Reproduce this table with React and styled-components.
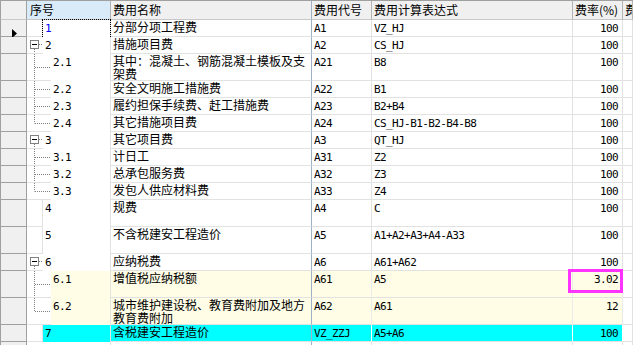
import React from "react";
import styled, { createGlobalStyle } from "styled-components";

const CJK = `"Noto Sans CJK SC", "Noto Sans", sans-serif`;
const MONO = `"DejaVu Sans Mono", "Liberation Mono", "Noto Sans CJK SC", monospace`;

const GlobalStyle = createGlobalStyle`
  html, body {
    margin: 0;
    padding: 0;
    background: #ffffff;
    overflow: hidden;
  }
`;

// 列宽（含右侧分隔线）
const W = { sel: 27, seq: 84, name: 201, code: 60, expr: 201, rate: 50 };

const rows = [
  { seq: "1", name: "分部分项工程费", code: "A1", expr: "VZ_HJ", rate: "100", tree: "leaf", current: true },
  { seq: "2", name: "措施项目费", code: "A2", expr: "CS_HJ", rate: "100", tree: "parent" },
  { seq: "2.1", name: "其中：混凝土、钢筋混凝土模板及支架费", code: "A21", expr: "B8", rate: "100", tree: "child", tall: true },
  { seq: "2.2", name: "安全文明施工措施费", code: "A22", expr: "B1", rate: "100", tree: "child" },
  { seq: "2.3", name: "履约担保手续费、赶工措施费", code: "A23", expr: "B2+B4", rate: "100", tree: "child" },
  { seq: "2.4", name: "其它措施项目费", code: "A24", expr: "CS_HJ-B1-B2-B4-B8", rate: "100", tree: "last" },
  { seq: "3", name: "其它项目费", code: "A3", expr: "QT_HJ", rate: "100", tree: "parent" },
  { seq: "3.1", name: "计日工", code: "A31", expr: "Z2", rate: "100", tree: "child" },
  { seq: "3.2", name: "总承包服务费", code: "A32", expr: "Z3", rate: "100", tree: "child" },
  { seq: "3.3", name: "发包人供应材料费", code: "A33", expr: "Z4", rate: "100", tree: "last" },
  { seq: "4", name: "规费", code: "A4", expr: "C", rate: "100", tree: "leaf", tall: true },
  { seq: "5", name: "不含税建安工程造价", code: "A5", expr: "A1+A2+A3+A4-A33", rate: "100", tree: "leaf", tall: true },
  { seq: "6", name: "应纳税费", code: "A6", expr: "A61+A62", rate: "100", tree: "parent" },
  { seq: "6.1", name: "增值税应纳税额", code: "A61", expr: "A5", rate: "3.02", tree: "child", tall: true, tone: "yellow" },
  { seq: "6.2", name: "城市维护建设税、教育费附加及地方教育费附加", code: "A62", expr: "A61", rate: "12", tree: "last", tall: true, tone: "yellow" },
  { seq: "7", name: "含税建安工程造价", code: "VZ_ZZJ", expr: "A5+A6", rate: "100", tree: "leaf", tone: "cyan" },
];

const tones = {
  yellow: { bg: "#fffde6", line: "#ebebeb" },
  cyan: { bg: "#00ffff", line: "#ffffff" },
};

const Sheet = styled.div`
  position: relative;
  width: 633px;
  height: 345px;
  overflow: hidden;
  background: #ffffff;
`;

const HeaderRow = styled.div`
  display: flex;
  height: 20px;
  box-sizing: border-box;
  border-top: 1px solid #a0a0a0;
`;

const HeadCell = styled.div`
  flex: ${(p) => (p.$w ? "none" : "1")};
  width: ${(p) => (p.$w ? `${p.$w}px` : "auto")};
  min-width: 0;
  box-sizing: border-box;
  height: 100%;
  padding-left: ${(p) => p.$pad || 2}px;
  background: ${(p) => (p.$active ? "#d9eaf9" : "#f0f0f0")};
  border-left: ${(p) => (p.$edge ? "1px solid #a0a0a0" : "none")};
  border-right: 1px solid ${(p) => p.$line || "#b4b4b4"};
  border-bottom: 1px solid #c8c8c8;
  font-family: ${CJK};
  font-size: 12px;
  line-height: 18px;
  color: #000000;
  white-space: nowrap;
  overflow: hidden;
`;

const Row = styled.div`
  display: flex;
  height: ${(p) => p.$h}px;
`;

const SelCell = styled.div`
  flex: none;
  width: ${W.sel}px;
  box-sizing: border-box;
  height: 100%;
  padding: 4px 0 0 11px;
  background: #f0f0f0;
  border-left: 1px solid #a0a0a0;
  border-right: 1px solid #a0a0a0;
  border-bottom: 1px solid #a0a0a0;
`;

const SeqCell = styled.div`
  flex: none;
  display: flex;
  width: ${W.seq}px;
  box-sizing: border-box;
  height: 100%;
  border-right: 1px solid #e2e2e2;
  border-bottom: 1px solid #e2e2e2;
  background: #ffffff;
`;

const TreeArea = styled.div`
  flex: none;
  width: ${(p) => p.$w}px;
  box-sizing: border-box;
  height: 100%;
  border-right: ${(p) => (p.$divider ? "1px solid #e2e2e2" : "none")};

  svg {
    display: block;
  }
`;

const SeqText = styled.div`
  flex: 1;
  height: 100%;
  padding: 2px 2px 0;
  background: ${(p) => p.$bg || "#ffffff"};
  color: ${(p) => (p.$current ? "#0000ff" : "#000000")};
  outline: ${(p) => (p.$current ? "1px dotted #000000" : "none")};
  font-family: ${MONO};
  font-size: 11px;
  letter-spacing: -0.6px;
  line-height: 13px;
  white-space: nowrap;
`;

const Cell = styled.div`
  flex: ${(p) => (p.$w ? "none" : "1")};
  width: ${(p) => (p.$w ? `${p.$w}px` : "auto")};
  box-sizing: border-box;
  height: 100%;
  padding: ${(p) => (p.$mono ? "2px" : "0")} ${(p) => (p.$right ? 4 : 2)}px 0 2px;
  background: ${(p) => p.$bg || "#ffffff"};
  border-right: 1px solid ${(p) => p.$line || "#e2e2e2"};
  border-bottom: 1px solid #e2e2e2;
  font-family: ${(p) => (p.$mono ? MONO : CJK)};
  font-size: ${(p) => (p.$mono ? 11 : 12)}px;
  letter-spacing: ${(p) => (p.$mono ? "-0.6px" : "0")};
  line-height: 13px;
  text-align: ${(p) => (p.$right ? "right" : "left")};
  color: #000000;
`;

const Highlight = styled.div`
  position: absolute;
  left: 568px;
  top: 269px;
  width: 55px;
  height: 24px;
  box-sizing: border-box;
  border: 3px solid #ff33ff;
  pointer-events: none;
`;

const Pointer = () => (
  <svg width="5" height="9" viewBox="0 0 5 9">
    <polygon points="0,0 5,4.5 0,9" fill="#000000" />
  </svg>
);

const dot = { stroke: "#808080", strokeWidth: 1, strokeDasharray: "1 1" };

const TreeLines = ({ kind, w, h }) => {
  const mid = Math.floor(h / 2) + 0.5;
  return (
    <svg width={w} height={h}>
      {kind === "parent" && (
        <>
          <line x1="12" y1="7.5" x2="16" y2="7.5" style={dot} />
          <line x1="7.5" y1="12" x2="7.5" y2={h} style={dot} />
          <rect x="3.5" y="3.5" width="8" height="8" fill="#ffffff" stroke="#808080" />
          <line x1="5" y1="7.5" x2="10" y2="7.5" stroke="#000000" />
        </>
      )}
      {(kind === "child" || kind === "last") && (
        <>
          <line x1="7.5" y1="0" x2="7.5" y2={kind === "last" ? mid : h} style={dot} />
          <line x1="8" y1={mid} x2={w} y2={mid} style={dot} />
        </>
      )}
    </svg>
  );
};

const DataRow = ({ row }) => {
  const h = row.tall ? 27 : 17;
  const tone = row.tone ? tones[row.tone] : {};
  const nested = row.tree === "child" || row.tree === "last";
  const treeW = nested ? 24 : 16;
  return (
    <Row $h={h}>
      <SelCell>{row.current && <Pointer />}</SelCell>
      <SeqCell>
        <TreeArea $w={treeW} $divider={row.tree === "leaf"}>
          <TreeLines kind={row.tree} w={treeW} h={h - 1} />
        </TreeArea>
        <SeqText $bg={tone.bg} $current={row.current}>
          {row.seq}
        </SeqText>
      </SeqCell>
      <Cell $w={W.name} $bg={tone.bg} $line="#9fb0c8">
        {row.name}
      </Cell>
      <Cell $w={W.code} $bg={tone.bg} $line={tone.line} $mono>
        {row.code}
      </Cell>
      <Cell $w={W.expr} $bg={tone.bg} $line={tone.line} $mono>
        {row.expr}
      </Cell>
      <Cell $w={W.rate} $bg={tone.bg} $line={tone.line} $mono $right>
        {row.rate}
      </Cell>
      <Cell />
    </Row>
  );
};

export default function App() {
  return (
    <>
      <GlobalStyle />
      <Sheet>
        <HeaderRow>
          <HeadCell $w={W.sel} $edge $line="#a0a0a0" />
          <HeadCell $w={W.seq} $active $pad={3}>
            序号
          </HeadCell>
          <HeadCell $w={W.name} $line="#9fb0c8">
            费用名称
          </HeadCell>
          <HeadCell $w={W.code}>费用代号</HeadCell>
          <HeadCell $w={W.expr}>费用计算表达式</HeadCell>
          <HeadCell $w={W.rate}>费率(%)</HeadCell>
          <HeadCell>费用类别</HeadCell>
        </HeaderRow>
        {rows.map((row) => (
          <DataRow key={row.seq} row={row} />
        ))}
        <Row $h={17}>
          <SelCell />
          <SeqCell />
          <Cell $w={W.name} $line="#9fb0c8" />
          <Cell $w={W.code} />
          <Cell $w={W.expr} />
          <Cell $w={W.rate} />
          <Cell />
        </Row>
        <Highlight />
      </Sheet>
    </>
  );
}
